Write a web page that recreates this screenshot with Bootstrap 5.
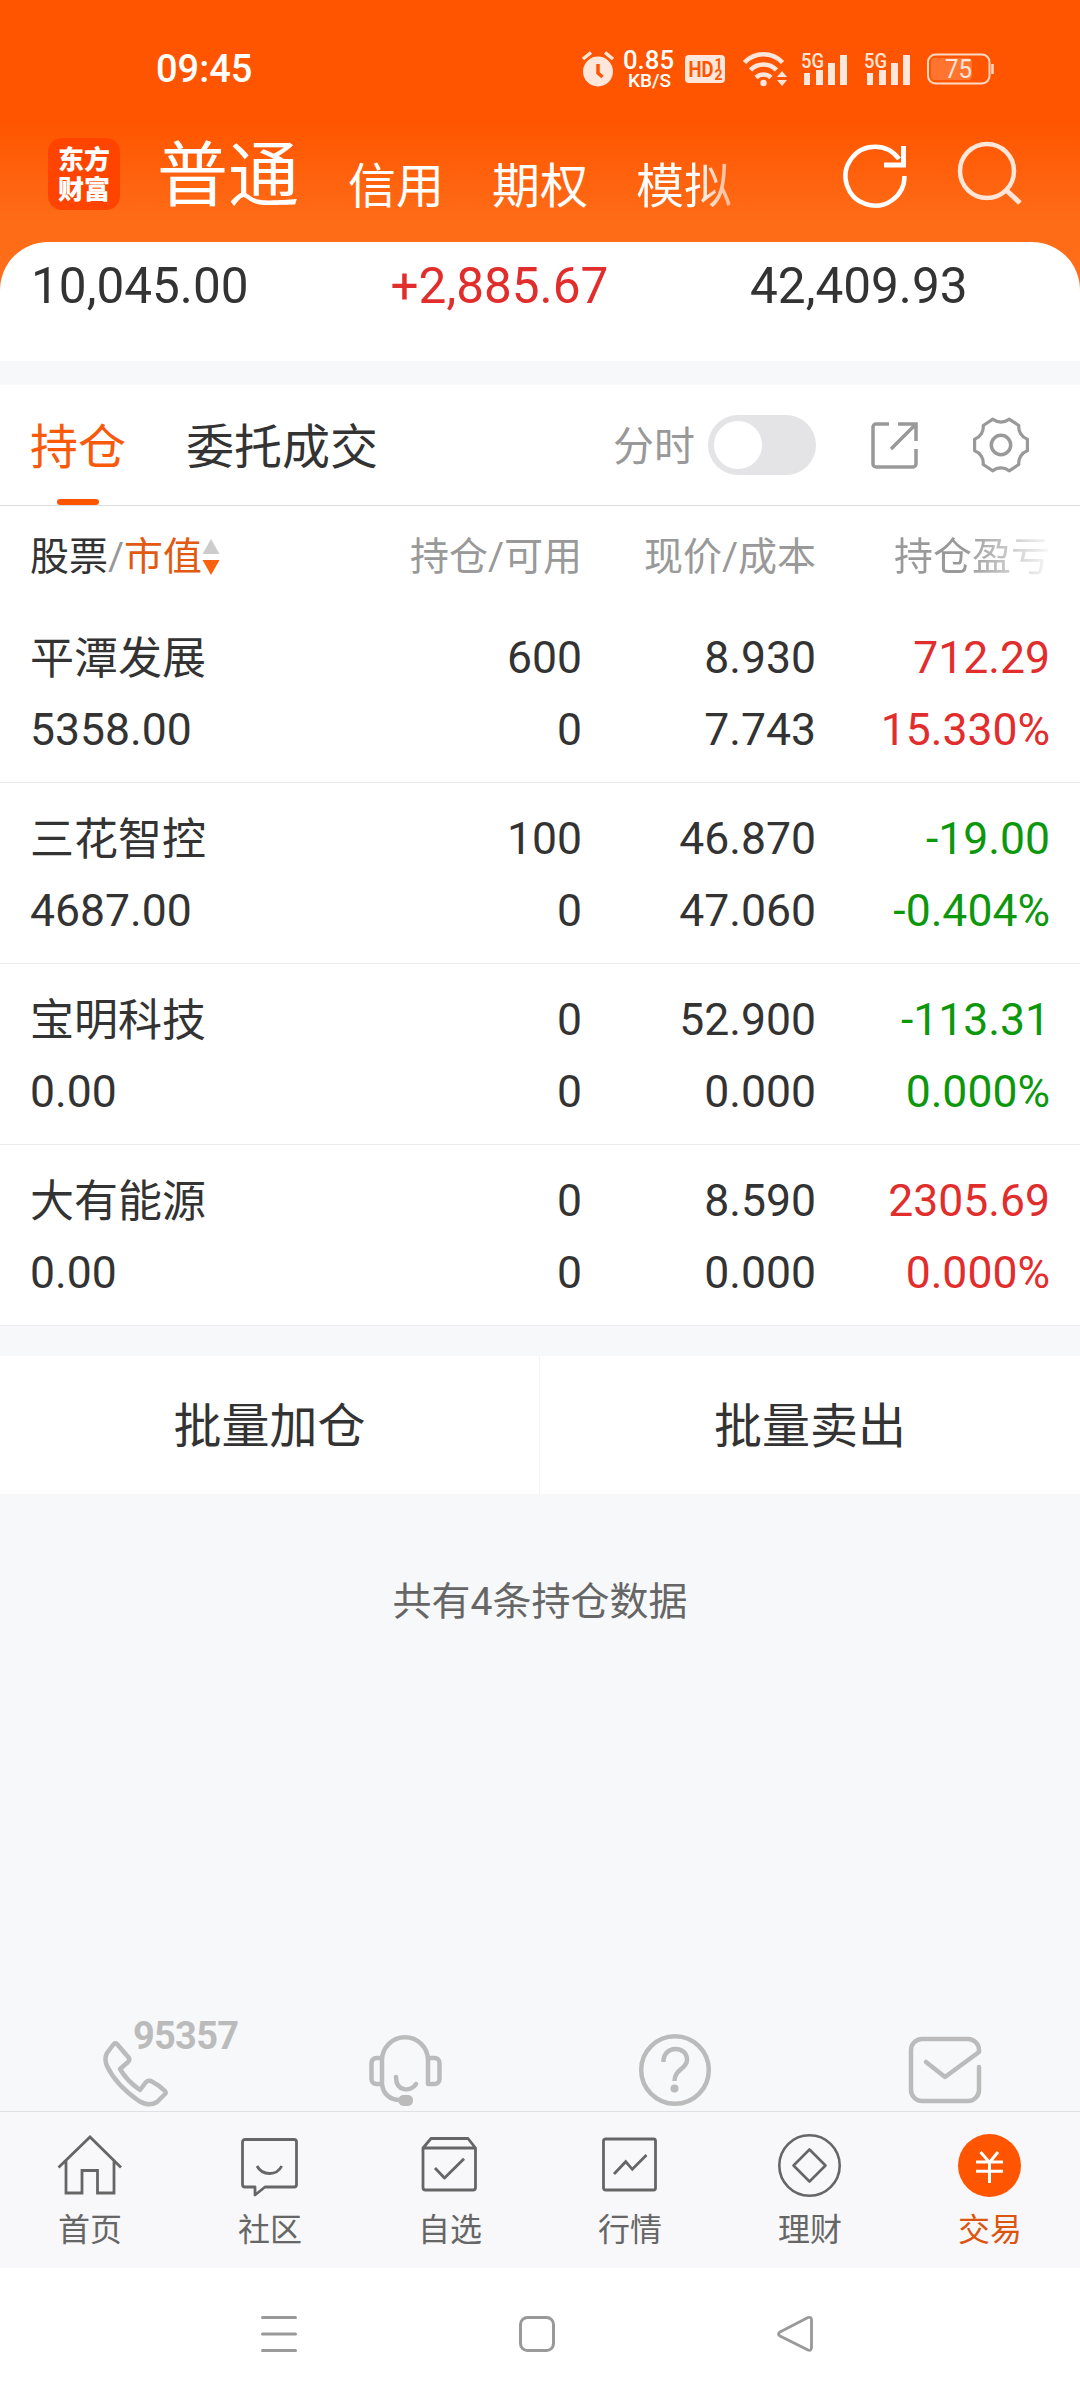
<!DOCTYPE html>
<html lang="zh-CN">
<head>
<meta charset="utf-8">
<meta name="viewport" content="width=device-width, initial-scale=1">
<title>持仓</title>
<link rel="stylesheet" href="https://cdn.jsdelivr.net/npm/bootstrap@5.3.0/dist/css/bootstrap.min.css">
<style>
body{width:1080px;height:2400px;margin:0;background:#f7f8fa;color:#333;font-family:Roboto,"Noto Sans CJK SC",sans-serif;font-size:44.500px;line-height:1;overflow:hidden}
svg{display:block;flex:none;overflow:visible}
svg text{font-family:Roboto,sans-serif}
.app-head{height:290px;background:linear-gradient(#ff5500 0,#ff5500 122px,#ff6c18 222px,#ff6e1a 290px);color:#fff}
.status-row{height:138px;padding:0 86px 0 156px}
.clock{font-size:38px;font-weight:500}
.status-icons{color:#ffe6da}
.title-row{height:104px;padding:0 59px 0 48px}
.brand{width:72px;height:72px;border-radius:14px;background:#ff4400;font:900 26px/30px "Noto Sans CJK SC",sans-serif;padding-top:5px}
.acct{height:72px;margin-left:37px;gap:48px;font-size:48px}
.acct span{line-height:76px}
.acct .on{font-size:71px}
.fade-w{background:linear-gradient(90deg,#fff 60%,#ffb68f 100%);-webkit-background-clip:text;background-clip:text;color:transparent}
.totals{height:119px;margin-top:-48px;border-radius:48px 48px 0 0;background:#fff;font-size:49.500px;padding:20px 0 0 31px}
.totals>div{width:359.500px;flex:none;line-height:49px}
.up{color:#e22d2d}
.down{color:#0c970c}
.tabs{height:121px;margin-top:24px;background:#fff;border-bottom:1px solid #dedede;padding:0 51px 0 30px;font-size:48px}
.tabs .tab{height:120px;line-height:125px;margin-right:60px}
.tab.on{color:#f8590a;position:relative}
.tab.on::after{content:"";position:absolute;left:27px;bottom:0;width:42px;height:6px;border-radius:3px;background:#ff5500}
.lbl{font-size:41px;color:#999;line-height:120px;padding-top:3px}
.toggle{width:108px;height:60px;border-radius:30px;background:#e4e4e6;padding:6px;margin:0 54px 0 13px}
.toggle i{display:block;width:48px;height:48px;border-radius:50%;background:#fff}
.line{display:grid;grid-template-columns:316px 236px 234px 234px;padding:0 30px;background:#fff}
.line>div{text-align:right;white-space:nowrap}
.line>div:first-child{text-align:left}
.heads{height:96px;line-height:102px;font-size:39px;color:#999}
.dark{color:#333}.hot{color:#e05a12}
.fade-g{background:linear-gradient(90deg,#999 45%,#f4f4f4 98%);-webkit-background-clip:text;background-clip:text;color:transparent}
.pos{height:181px;padding-top:20px;border-bottom:1px solid #ececee;line-height:72px}
.stock{font-size:44px;position:relative;top:1px}
.batch{height:138px;margin-top:30px;background:#fff;font-size:48px;line-height:142px}
.batch>div:first-child{border-right:1px solid #f4f4f4}
.summary{height:617px;padding-top:89px;font-size:39px;line-height:39px;color:#666}
.help{margin-top:-94px;height:94px}
.help>div{width:270px}
.tabbar{height:157px;border-top:1px solid #dfe0e3;background:#f8f8fa;color:#666;padding-top:22px;font-size:32px}
.tabbar>div{width:180px}
.tabbar span{margin-top:15px;line-height:34px}
.tabbar .on{color:#dc5510}
.sys{height:132px;background:#fff;padding:46px 265px 0 259px}
</style>
<script src="https://cdn.jsdelivr.net/npm/bootstrap@5.3.0/dist/js/bootstrap.bundle.min.js"></script>
</head>
<body>
<header class="app-head">
  <div class="status-row d-flex align-items-center justify-content-between">
    <span class="clock">09:45</span>
    <div class="status-icons d-flex align-items-center">
      <svg width="34" height="36" viewBox="0 0 34 36"><circle cx="17" cy="20.500" r="15" fill="currentColor"/><path d="M2 8L10 1.500M32 8L24 1.500" stroke="currentColor" stroke-width="3.500"/><path d="M17 13v9l4.500 4" fill="none" stroke="#ff5500" stroke-width="3.500"/></svg>
      <svg class="ms-2" width="52" height="38" viewBox="0 0 52 38" fill="#fff" font-weight="500"><text x="0" y="18.500" font-size="25" textLength="51" lengthAdjust="spacingAndGlyphs">0.85</text><text x="5" y="37" font-size="19" textLength="43" lengthAdjust="spacingAndGlyphs">KB/S</text></svg>
      <svg style="margin-left:10px" width="40" height="30" viewBox="0 0 40 30"><rect y="1" width="40" height="28" rx="4" fill="currentColor"/><g fill="#ff5500" font-weight="700"><text x="3.500" y="23" font-size="22" textLength="25" lengthAdjust="spacingAndGlyphs">HD</text><text x="29.500" y="14.500" font-size="14">1</text><text x="29.500" y="26" font-size="14">2</text></g></svg>
      <svg style="margin-left:18px" width="46" height="36" viewBox="0 0 46 36"><g fill="none" stroke="currentColor" stroke-width="4.600"><path d="M1.500 11.500a26 26 0 0 1 38 0M7.500 19a18 18 0 0 1 26 0M13 26.500a11 11 0 0 1 15 0"/></g><circle cx="20.500" cy="32" r="3.200" fill="currentColor"/><path d="M34 26l5-6 5 6zM34 29l5 6 5-6z" fill="currentColor"/></svg>
      <svg style="margin-left:12px" width="47" height="34" viewBox="0 0 47 34" fill="currentColor"><text x="0" y="16" font-size="20" font-weight="500" textLength="23" lengthAdjust="spacingAndGlyphs">5G</text><path d="M3 21h6v12H3zM15 18h7v15h-7zM27 11h7v22h-7zM39 3h7v30h-7z"/></svg>
      <svg style="margin-left:16px" width="47" height="34" viewBox="0 0 47 34" fill="currentColor"><text x="0" y="16" font-size="20" font-weight="500" textLength="23" lengthAdjust="spacingAndGlyphs">5G</text><path d="M3 21h6v12H3zM15 18h7v15h-7zM27 11h7v22h-7zM39 3h7v30h-7z"/></svg>
      <svg style="margin-left:16px" width="67" height="32" viewBox="0 0 67 32"><rect x="1" y="1.500" width="61.500" height="29" rx="7.500" fill="none" stroke="#ffd9c4" stroke-width="2"/><rect x="4" y="5" width="41" height="22" rx="4" fill="#ff752f"/><path d="M65.500 11v10" stroke="#ffd9c4" stroke-width="2.500"/><text x="18" y="24.500" font-size="25" fill="currentColor" textLength="27" lengthAdjust="spacingAndGlyphs">75</text></svg>
    </div>
  </div>
  <div class="title-row d-flex align-items-start">
    <div class="brand text-center"><div>东方</div><div>财富</div></div>
    <nav class="acct d-flex align-items-start flex-grow-1">
      <span class="on" style="width:143px">普通</span><span style="padding-top:11px">信用</span><span style="padding-top:11px">期权</span><span class="fade-w" style="padding-top:11px">模拟</span>
    </nav>
    <svg width="64" height="72" viewBox="0 0 64 72" fill="none" stroke="#fff" stroke-width="4.500"><path d="M60.500 38A29.500 29.500 0 1 1 55 21"/><path d="M59.500 8v19H40" stroke-width="5"/></svg>
    <svg style="margin-left:49px" width="64" height="72" viewBox="0 0 64 72" fill="none" stroke="#ffe6d9" stroke-width="4.500"><circle cx="30" cy="33" r="27"/><path d="M49 52l14 13" stroke-width="5"/></svg>
  </div>
</header>
<section class="totals d-flex"><div>10,045.00</div><div class="up">+2,885.67</div><div>42,409.93</div></section>
<section class="tabs d-flex align-items-center">
  <div class="tab on">持仓</div><div class="tab">委托成交</div>
  <span class="lbl ms-auto">分时</span>
  <div class="toggle"><i></i></div>
  <svg width="48" height="48" viewBox="0 0 48 48" fill="none" stroke="#999" stroke-width="3.500"><path d="M19 3H6a3 3 0 0 0-3 3v37a3 3 0 0 0 3 3h37a3 3 0 0 0 3-3V28M28 3h18v17M45 4L21 28"/></svg>
  <svg style="margin-left:55px" width="56" height="56" viewBox="-28 -28 56 56" fill="none" stroke="#999" stroke-width="3.200"><path stroke-linejoin="round" d="M26.400-5.800V5.800A13 13 0 0 0 17.800 19.500L8.100 25.800A13 13 0 0 0-8.100 25.800L-17.800 19.500A13 13 0 0 0-26.400 5.800V-5.800A13 13 0 0 0-17.800-19.500L-8.100-25.800A13 13 0 0 0 8.100-25.800L17.800-19.500A13 13 0 0 0 26.400-5.800Z"/><circle r="9.700" stroke-width="3.500"/></svg>
</section>
<section>
  <div class="line heads">
    <div class="d-flex align-items-center"><span class="dark">股票</span>/<span class="hot">市值</span><svg class="ms-0" width="18" height="36" viewBox="0 0 18 36"><path d="M9 0l8.500 15H.500z" fill="#ccc"/><path d="M9 36l8.500-15H.500z" fill="#f9600f"/></svg></div>
    <div>持仓/可用</div><div>现价/成本</div><div><span class="fade-g">持仓盈亏</span></div>
  </div>
  <div class="line pos"><div><div class="stock">平潭发展</div>5358.00</div><div>600<br>0</div><div>8.930<br>7.743</div><div class="up">712.29<br>15.330%</div></div>
  <div class="line pos"><div><div class="stock">三花智控</div>4687.00</div><div>100<br>0</div><div>46.870<br>47.060</div><div class="down">-19.00<br>-0.404%</div></div>
  <div class="line pos"><div><div class="stock">宝明科技</div>0.00</div><div>0<br>0</div><div>52.900<br>0.000</div><div class="down">-113.31<br>0.000%</div></div>
  <div class="line pos"><div><div class="stock">大有能源</div>0.00</div><div>0<br>0</div><div>8.590<br>0.000</div><div class="up">2305.69<br>0.000%</div></div>
</section>
<section class="batch d-flex text-center"><div class="w-50">批量加仓</div><div class="w-50">批量卖出</div></section>
<div class="summary text-center">共有4条持仓数据</div>
<section class="help d-flex">
  <div><svg width="270" height="94" viewBox="0 2017 270 94"><text x="133" y="2049" font-size="38" font-weight="700" fill="#bbb" textLength="106">95357</text><path transform="translate(103 2041)" d="M14 3L26 17Q27 19 25 21L17 28Q24 40 37 49L43 41Q45 39 48 40Q56 44 62 50Q64 52 61 54L54 61Q46 66 36 60Q13 44 4 25Q1 18 4 12L10 4Q12 1 14 3Z" fill="none" stroke="#bbb" stroke-width="4.500" stroke-linejoin="round"/></svg></div>
  <div><svg width="270" height="94" viewBox="270 2017 270 94"><g transform="translate(369 2035)" fill="none" stroke="#bbb" stroke-width="4.500" stroke-linecap="round" stroke-linejoin="round"><path d="M13 23H7.500a5 5 0 0 0-5 5v16a5 5 0 0 0 5 5H13M13 49V25A23 23 0 0 1 36 2.300A23 23 0 0 1 59 25V49h6.500a5 5 0 0 0 5-5V28a5 5 0 0 0-5-5H59M13 49C14 59 21 65 31 65M27 42C27 57 42 57 47 49"/><rect x="29.500" y="60" width="14.500" height="11" rx="5" fill="#bbb" stroke="none"/></g></svg></div>
  <div><svg width="270" height="94" viewBox="540 2017 270 94"><g fill="none" stroke="#bbb" stroke-width="4.500"><circle cx="675" cy="2070" r="33.800"/><path d="M663.500 2062C663 2045 687 2045 687 2060C687 2069 674.500 2069 674.500 2081"/></g><circle cx="674.500" cy="2088.500" r="4" fill="#bbb"/></svg></div>
  <div><svg width="270" height="94" viewBox="810 2017 270 94"><path d="M926 2062L945 2077L979 2052V2050A11 11 0 0 0 968 2039H922A11 11 0 0 0 911 2050V2090A11 11 0 0 0 922 2101H968A11 11 0 0 0 979 2090V2067" fill="none" stroke="#bbb" stroke-width="4.500" stroke-linecap="round" stroke-linejoin="round"/></svg></div>
</section>
<nav class="tabbar d-flex">
  <div class="d-flex flex-column align-items-center"><svg width="64" height="64" viewBox="0 0 64 64" fill="none" stroke="#666" stroke-width="2.800"><path d="M.500 33.500L32 3l31 30.500M8 27v32h16V36.500h15.500V59H56V27"/></svg><span>首页</span></div>
  <div class="d-flex flex-column align-items-center"><svg width="64" height="64" viewBox="0 0 64 64" fill="none" stroke="#666" stroke-width="2.800" stroke-linejoin="round"><path d="M7 5.500H56a2.500 2.500 0 0 1 2.500 2.500V50.500A2.500 2.500 0 0 1 56 53H27L17 61V53H7A2.500 2.500 0 0 1 4.500 50.500V8A2.500 2.500 0 0 1 7 5.500ZM19 32Q23 39.500 31.500 39.500T43.700 32"/></svg><span>社区</span></div>
  <div class="d-flex flex-column align-items-center"><svg width="64" height="64" viewBox="0 0 64 64" fill="none" stroke="#666" stroke-width="2.800" stroke-linejoin="round"><path d="M5 14L13 4.500H50L57.500 14V53.500A2.500 2.500 0 0 1 55 56H7.500A2.500 2.500 0 0 1 5 53.500ZH57.500M17 34l9.500 10L46 24.700"/></svg><span>自选</span></div>
  <div class="d-flex flex-column align-items-center"><svg width="64" height="64" viewBox="0 0 64 64" fill="none" stroke="#666" stroke-width="2.800"><rect x="5.500" y="5" width="52" height="51" rx="2"/><path d="M16 40L27.700 27.700l6.600 7.600L48.500 21"/></svg><span>行情</span></div>
  <div class="d-flex flex-column align-items-center"><svg width="64" height="64" viewBox="0 0 64 64" fill="none" stroke="#666" stroke-width="2.600" stroke-linejoin="round"><circle cx="31.500" cy="31.500" r="30.200"/><path d="M31.500 15.500L47.500 31.500L31.500 47.500L15.500 31.500Z"/></svg><span>理财</span></div>
  <div class="on d-flex flex-column align-items-center"><svg width="64" height="64" viewBox="0 0 64 64" fill="none" stroke="#fff" stroke-width="3"><circle cx="31.500" cy="31.500" r="31.500" fill="#f50" stroke="none"/><path d="M22.500 18l9 10.500L40 18M31.500 28v21M18 28h27M18 37.300h27"/></svg><span>交易</span></div>
</nav>
<footer class="sys d-flex justify-content-between">
  <svg width="40" height="40" viewBox="0 0 40 40" stroke="#999" stroke-width="3" stroke-linecap="round"><path d="M3.500 3.500h33M3.500 20h33M3.500 36.500h33"/></svg>
  <svg width="40" height="40" viewBox="0 0 40 40" fill="none" stroke="#999" stroke-width="3"><rect x="3.500" y="3.500" width="33" height="33" rx="7"/></svg>
  <svg width="40" height="40" viewBox="0 0 40 40" fill="none" stroke="#999" stroke-width="2.800" stroke-linejoin="round"><path d="M33 3.500Q36.500 2.500 36.500 6V33Q36.500 37.500 33 36L5 22Q2 20 5 18Z"/></svg>
</footer>
</body>
</html>
